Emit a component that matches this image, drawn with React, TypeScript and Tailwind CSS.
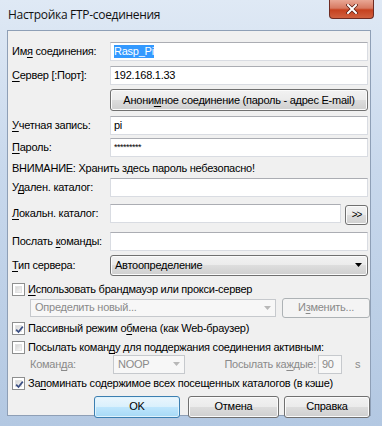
import React from "react";

const ui = "font-['Liberation_Sans',Arial,sans-serif] text-[11px] tracking-[-0.25px] text-black";
const boxCls = "h-[19px] bg-white border border-[#d9dce2] border-t-[#abadb3] flex items-center px-[3px]";
const btnCls =
  "rounded-[3px] border border-[#707070] bg-[linear-gradient(to_bottom,#f2f2f2_0%,#ebebeb_50%,#dddddd_50%,#cfcfcf_100%)] shadow-[inset_0_0_0_1px_#fbfbfb] flex items-center justify-center";

const U = ({ children }: { children: React.ReactNode }) => <span className="underline underline-offset-[2px]">{children}</span>;

function Check({ checked }: { checked?: boolean }) {
  return (
    <span className="w-[13px] h-[13px] shrink-0 border border-[#8e8f8f] bg-white p-[2px] flex">
      <span className="relative flex-1 bg-[linear-gradient(135deg,#d6d6d6,#f6f6f6)] border border-[#e2e2e2]">
        {checked && (
          <svg viewBox="0 0 9 9" className="absolute -left-[1px] -top-[1px] w-[9px] h-[9px]">
            <path d="M1.2 4.6 L3.5 7 L7.8 1.6" fill="none" stroke="#3b4f84" strokeWidth="1.7" />
          </svg>
        )}
      </span>
    </span>
  );
}

function Arrow({ color }: { color: string }) {
  return (
    <svg viewBox="0 0 7 4" className="w-[7px] h-[4px]">
      <path d="M0 0 L7 0 L3.5 4 Z" fill={color} />
    </svg>
  );
}

function Field({ label, children }: { label: React.ReactNode; children?: React.ReactNode }) {
  return (
    <div className="flex items-center">
      <span className="w-[98px] shrink-0">{label}</span>
      {children}
    </div>
  );
}

export default function App() {
  return (
    <div className={`${ui} relative w-[382px] h-[426px] overflow-hidden bg-[linear-gradient(to_bottom,#dfe9f5_0%,#c8d8ec_40%,#b3c8e2_100%)]`}>
      <div className="h-[30px] flex items-center pl-[8px] pb-[1px]">
        <span className="font-['Open_Sans',sans-serif] text-[12px] tracking-[-0.3px] text-[#111]">Настройка FTP-соединения</span>
      </div>
      <div className="absolute right-[8px] top-0 w-[45px] h-[19px] rounded-b-[4px] border border-t-0 border-[#6e2b22] bg-[linear-gradient(to_bottom,#e9a795_0%,#d77a62_45%,#c6411f_55%,#d0603f_100%)] flex items-center justify-center">
        <svg viewBox="0 0 12 10" className="w-[12px] h-[10px]">
          <path d="M2 1 L10 9 M10 1 L2 9" stroke="#5a1a10" strokeWidth="3.4" strokeLinecap="square" />
          <path d="M2 1 L10 9 M10 1 L2 9" stroke="#ffffff" strokeWidth="2" strokeLinecap="square" />
        </svg>
      </div>

      <div className="ml-[7px] w-[364px] h-[386px] bg-[#f0f0f0] border border-[#8e9fb6] flex flex-col pl-[4px]">
        <div className="mt-[11px]">
          <Field label={<>Им<U>я</U> соединения:</>}>
            <div className={`${boxCls} w-[258px]`}>
              <span className="bg-[#3399ff] text-white leading-[13px]">Rasp_Pi</span>
            </div>
          </Field>
        </div>
        <div className="mt-[5px]">
          <Field label={<><U>С</U>ервер [:Порт]:</>}>
            <div className={`${boxCls} w-[258px]`}>192.168.1.33</div>
          </Field>
        </div>
        <div className="mt-[4px] pl-[98px]">
          <div className={`${btnCls} w-[258px] h-[22px]`}>
            Анони<U>м</U>ное соединение (пароль - адрес E-mail)
          </div>
        </div>
        <div className="mt-[5px]">
          <Field label={<><U>У</U>четная запись:</>}>
            <div className={`${boxCls} w-[258px]`}>pi</div>
          </Field>
        </div>
        <div className="mt-[3px]">
          <Field label={<><U>П</U>ароль:</>}>
            <div className={`${boxCls} w-[258px] text-[9px] tracking-[-0.5px]`}>*********</div>
          </Field>
        </div>
        <div className="mt-[3px] h-[17px] flex items-center">ВНИМАНИЕ: Хранить здесь пароль небезопасно!</div>
        <div className="mt-[1px]">
          <Field label={<>У<U>д</U>ален. каталог:</>}>
            <div className={`${boxCls} w-[258px]`} />
          </Field>
        </div>
        <div className="mt-[6px]">
          <Field label={<><U>Л</U>окальн. каталог:</>}>
            <div className={`${boxCls} w-[231px]`} />
            <div className={`${btnCls} ml-[4px] w-[23px] h-[20px] mt-[2px] text-[10px] tracking-[-1px]`}>&gt;&gt;</div>
          </Field>
        </div>
        <div className="mt-[7px]">
          <Field label={<>Послать <U>к</U>оманды:</>}>
            <div className={`${boxCls} w-[258px]`} />
          </Field>
        </div>
        <div className="mt-[4px]">
          <Field label={<><U>Т</U>ип сервера:</>}>
            <div className={`${btnCls} w-[258px] h-[21px] !justify-between px-[4px]`}>
              <span>Автоопределение</span>
              <span className="pr-[1px]"><Arrow color="#000" /></span>
            </div>
          </Field>
        </div>

        <div className="mt-[7px] flex items-center h-[13px] gap-[3px]">
          <Check />
          <span><U>И</U>спользовать брандмауэр или прокси-сервер</span>
        </div>
        <div className="mt-[2px] h-[20px] flex items-center pl-[18px]">
          <div className="w-[246px] h-[18px] bg-[#f7f7f7] border border-[#c6c9cd] flex items-center justify-between px-[4px] text-[#8a8a8a]">
            <span>Определить новый...</span>
            <Arrow color="#b8b8b8" />
          </div>
          <div className="ml-[6px] w-[88px] h-[20px] rounded-[3px] border border-[#adb2b5] bg-[#f4f4f4] flex items-center justify-center text-[#8a8a8a]">
            И<U>з</U>менить...
          </div>
        </div>
        <div className="mt-[4px] flex items-center h-[13px] gap-[3px]">
          <Check checked />
          <span>Пассивный режим о<U>б</U>мена (как Web-браузер)</span>
        </div>
        <div className="mt-[6px] flex items-center h-[13px] gap-[3px]">
          <Check />
          <span>Посылать коман<U>д</U>у для поддержания соединения активным:</span>
        </div>
        <div className="mt-[1px] h-[19px] flex items-center pl-[18px] text-[#8a8a8a]">
          <span className="w-[83px] shrink-0">Коман<U>д</U>а:</span>
          <div className="w-[72px] shrink-0 h-[19px] bg-[#f7f7f7] border border-[#c6c9cd] flex items-center justify-between px-[4px]">
            <span>NOOP</span>
            <Arrow color="#b8b8b8" />
          </div>
          <span className="w-[133px] shrink-0 text-right pr-[2px]">Посылать ка<U>ж</U>дые:</span>
          <div className="w-[24px] shrink-0 h-[19px] bg-[#f7f7f7] border border-[#c6c9cd] flex items-center px-[3px]">90</div>
          <span className="ml-[13px]">s</span>
        </div>
        <div className="mt-[3px] flex items-center h-[13px] gap-[3px]">
          <Check checked />
          <span>За<U>п</U>оминать содержимое всех посещенных каталогов (в кэше)</span>
        </div>

        <div className="mt-[6px] flex pl-[82px]">
          <div className="w-[86px] h-[22px] rounded-[3px] border border-[#3c7fb1] bg-[linear-gradient(to_bottom,#eaf6fd_0%,#d9f0fc_50%,#bee6fd_50%,#a7d9f5_100%)] shadow-[inset_0_0_0_1px_#dff3fd] flex items-center justify-center">
            OK
          </div>
          <div className={`${btnCls} ml-[8px] w-[91px] h-[22px]`}>Отмена</div>
          <div className={`${btnCls} ml-[5px] w-[86px] h-[22px]`}>Справка</div>
        </div>
      </div>
    </div>
  );
}
